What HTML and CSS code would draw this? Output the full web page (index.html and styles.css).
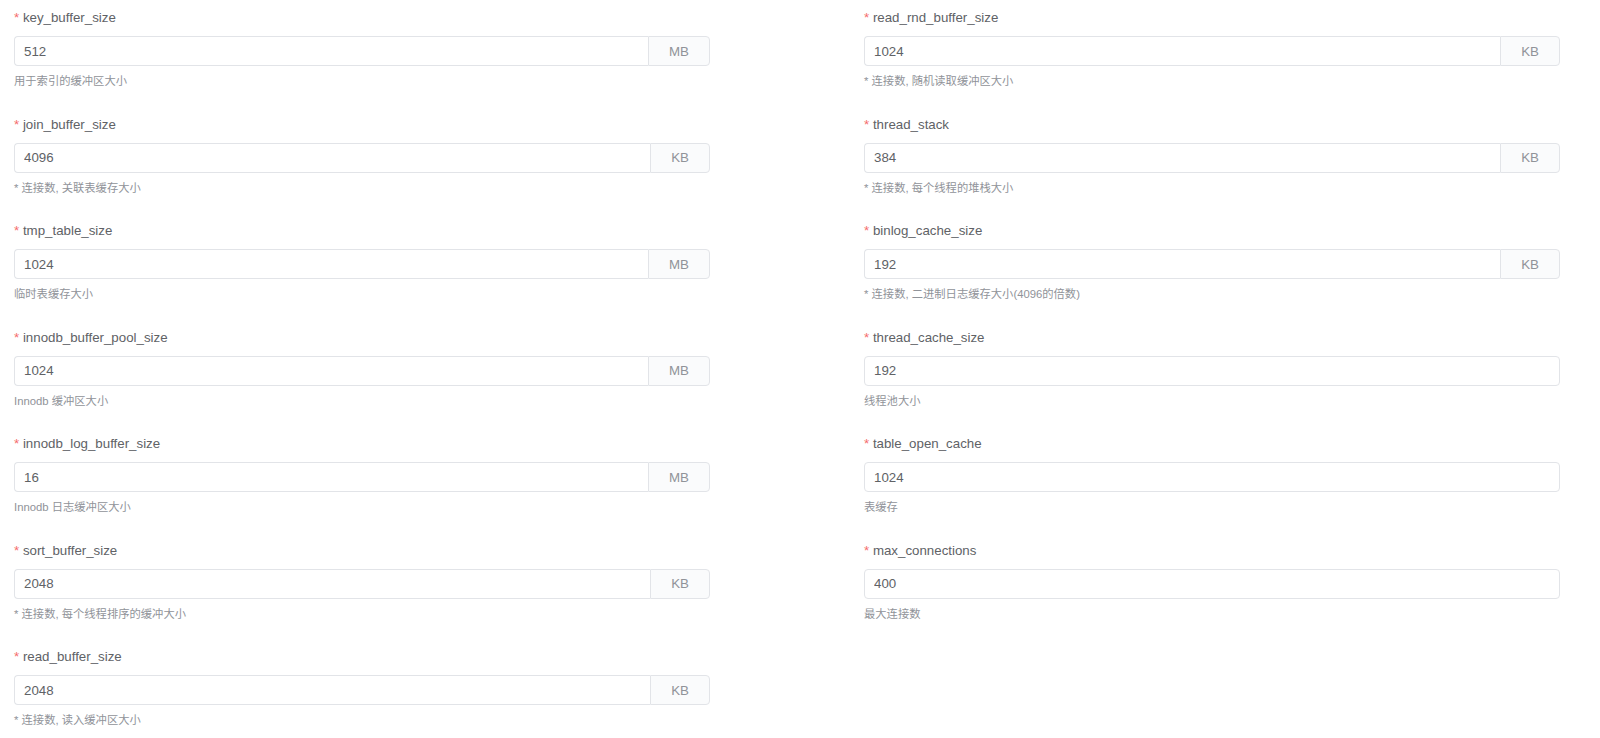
FILE: index.html
```html
<!DOCTYPE html>
<html lang="zh">
<head>
<meta charset="utf-8">
<title>MySQL 配置</title>
<link rel="stylesheet" href="styles.css">
</head>
<body>
<form class="form">
  <div class="col">
    <div class="field">
      <label class="label"><span class="req">*</span> key_buffer_size</label>
      <div class="group"><input class="input" type="text" value="512"><span class="append">MB</span></div>
      <div class="hint">用于索引的缓冲区大小</div>
    </div>
    <div class="field">
      <label class="label"><span class="req">*</span> join_buffer_size</label>
      <div class="group"><input class="input" type="text" value="4096"><span class="append">KB</span></div>
      <div class="hint">* 连接数, 关联表缓存大小</div>
    </div>
    <div class="field">
      <label class="label"><span class="req">*</span> tmp_table_size</label>
      <div class="group"><input class="input" type="text" value="1024"><span class="append">MB</span></div>
      <div class="hint">临时表缓存大小</div>
    </div>
    <div class="field">
      <label class="label"><span class="req">*</span> innodb_buffer_pool_size</label>
      <div class="group"><input class="input" type="text" value="1024"><span class="append">MB</span></div>
      <div class="hint">Innodb 缓冲区大小</div>
    </div>
    <div class="field">
      <label class="label"><span class="req">*</span> innodb_log_buffer_size</label>
      <div class="group"><input class="input" type="text" value="16"><span class="append">MB</span></div>
      <div class="hint">Innodb 日志缓冲区大小</div>
    </div>
    <div class="field">
      <label class="label"><span class="req">*</span> sort_buffer_size</label>
      <div class="group"><input class="input" type="text" value="2048"><span class="append">KB</span></div>
      <div class="hint">* 连接数, 每个线程排序的缓冲大小</div>
    </div>
    <div class="field">
      <label class="label"><span class="req">*</span> read_buffer_size</label>
      <div class="group"><input class="input" type="text" value="2048"><span class="append">KB</span></div>
      <div class="hint">* 连接数, 读入缓冲区大小</div>
    </div>
  </div>
  <div class="col col-right">
    <div class="field">
      <label class="label"><span class="req">*</span> read_rnd_buffer_size</label>
      <div class="group"><input class="input" type="text" value="1024"><span class="append">KB</span></div>
      <div class="hint">* 连接数, 随机读取缓冲区大小</div>
    </div>
    <div class="field">
      <label class="label"><span class="req">*</span> thread_stack</label>
      <div class="group"><input class="input" type="text" value="384"><span class="append">KB</span></div>
      <div class="hint">* 连接数, 每个线程的堆栈大小</div>
    </div>
    <div class="field">
      <label class="label"><span class="req">*</span> binlog_cache_size</label>
      <div class="group"><input class="input" type="text" value="192"><span class="append">KB</span></div>
      <div class="hint">* 连接数, 二进制日志缓存大小(4096的倍数)</div>
    </div>
    <div class="field">
      <label class="label"><span class="req">*</span> thread_cache_size</label>
      <div class="group"><input class="input solo" type="text" value="192"></div>
      <div class="hint">线程池大小</div>
    </div>
    <div class="field">
      <label class="label"><span class="req">*</span> table_open_cache</label>
      <div class="group"><input class="input solo" type="text" value="1024"></div>
      <div class="hint">表缓存</div>
    </div>
    <div class="field">
      <label class="label"><span class="req">*</span> max_connections</label>
      <div class="group"><input class="input solo" type="text" value="400"></div>
      <div class="hint">最大连接数</div>
    </div>
  </div>
</form>
</body>
</html>
```

FILE: styles.css
```css
html, body {
  margin: 0;
  padding: 0;
  background: #ffffff;
}

body {
  font-family: "Liberation Sans", "Noto Sans CJK SC", sans-serif;
  color: #606266;
}

.form {
  display: flex;
  padding: 8px 0 0 14px;
}

.col {
  flex: 0 0 850px;
  width: 850px;
  display: flex;
  flex-direction: column;
}

.col-right {
  flex: 1 1 auto;
  width: auto;
  min-width: 0;
}

.field {
  width: 696px;
  display: flex;
  flex-direction: column;
  margin-bottom: 24.5px;
}

.label {
  font-size: 13.3px;
  line-height: 20px;
  height: 20px;
  color: #606266;
  margin-bottom: 8px;
}

.req {
  color: #f56c6c;
}

.group {
  display: flex;
  height: 30px;
}

.input {
  flex: 1;
  min-width: 0;
  box-sizing: border-box;
  height: 30px;
  margin: 0;
  padding: 0 9px;
  border: 1px solid #e2e4e8;
  border-right: 0;
  border-radius: 4px 0 0 4px;
  font-family: "Liberation Sans", sans-serif;
  font-size: 13.3px;
  color: #606266;
  background: #ffffff;
  outline: none;
}

.input.solo {
  border-right: 1px solid #e2e4e8;
  border-radius: 4px;
}

.append {
  box-sizing: border-box;
  height: 30px;
  padding: 0 20px;
  display: flex;
  align-items: center;
  background: #fafbfc;
  border: 1px solid #e2e4e8;
  border-radius: 0 4px 4px 0;
  font-size: 13.3px;
  color: #909399;
}

.hint {
  margin-top: 6px;
  font-size: 11.3px;
  line-height: 18px;
  height: 18px;
  color: #909399;
  white-space: nowrap;
}
```
